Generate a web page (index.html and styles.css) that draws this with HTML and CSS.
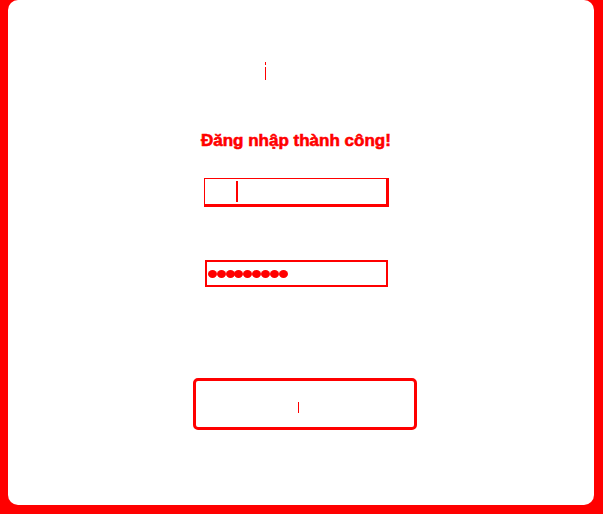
FILE: index.html
```html
<!DOCTYPE html>
<html lang="vi">
<head>
<meta charset="utf-8">
<title>Đăng nhập</title>
<link rel="stylesheet" href="styles.css">
</head>
<body>
<main class="card">
  <div class="mark"><span class="mark-dot"></span><span class="mark-stem"></span></div>
  <h1 class="title">Đăng nhập thành công!</h1>
  <div class="field field-user"><span class="caret"></span></div>
  <div class="field field-pass">
    <span class="dot"></span><span class="dot"></span><span class="dot"></span>
    <span class="dot"></span><span class="dot"></span><span class="dot"></span>
    <span class="dot"></span><span class="dot"></span><span class="dot"></span>
  </div>
  <button class="btn" type="button"><span class="btn-caret"></span></button>
</main>
</body>
</html>
```
FILE: styles.css
```css
html, body {
  margin: 0;
  padding: 0;
  background: #ff0000;
  width: 603px;
  height: 514px;
  overflow: hidden;
  font-family: "Liberation Sans", Arial, sans-serif;
}
.card {
  box-sizing: border-box;
  margin: 0 9px 0 8px;
  width: 586px;
  height: 505px;
  background: #ffffff;
  border-radius: 10px;
  display: flex;
  flex-direction: column;
  align-items: flex-start;
  padding-top: 62px;
}
.mark {
  margin-left: 257px;
  width: 1px;
  display: flex;
  flex-direction: column;
  gap: 2px;
}
.mark-dot {
  width: 1px;
  height: 3px;
  background: #ff0000;
}
.mark-stem {
  width: 1px;
  height: 13px;
  background: #ff0000;
}
.title {
  margin: 51px 0 0 193px;
  font-size: 17px;
  font-weight: 700;
  line-height: 20px;
  color: #ff0000;
  letter-spacing: 0;
  -webkit-text-stroke: 0.6px #ff0000;
  white-space: nowrap;
}
.field {
  box-sizing: border-box;
  display: flex;
  align-items: center;
}
.field-user {
  margin: 27px 0 0 196px;
  width: 185px;
  height: 29px;
  border-top: 1px solid #ff0000;
  border-left: 1px solid #ff0000;
  border-bottom: 3px solid #ff0000;
  border-right: 3px solid #ff0000;
  padding-left: 31px;
}
.caret {
  width: 2px;
  height: 21px;
  background: #ff0000;
}
.field-pass {
  margin: 53px 0 0 197px;
  width: 183px;
  height: 27px;
  border: 2px solid #ff0000;
  padding-left: 1px;
}
.dot {
  width: 9px;
  height: 8px;
  border-radius: 50%;
  background: #ff0000;
  margin-right: -0.2px;
}
.btn {
  box-sizing: border-box;
  margin: 91px 0 0 185px;
  width: 224px;
  height: 52px;
  border: 3px solid #ff0000;
  border-radius: 5px;
  background: #ffffff;
  display: flex;
  align-items: center;
  justify-content: center;
  padding: 0;
}
.btn-caret {
  width: 1px;
  height: 11px;
  background: #ff0000;
  margin-left: -14px;
  margin-top: 6px;
}
```
